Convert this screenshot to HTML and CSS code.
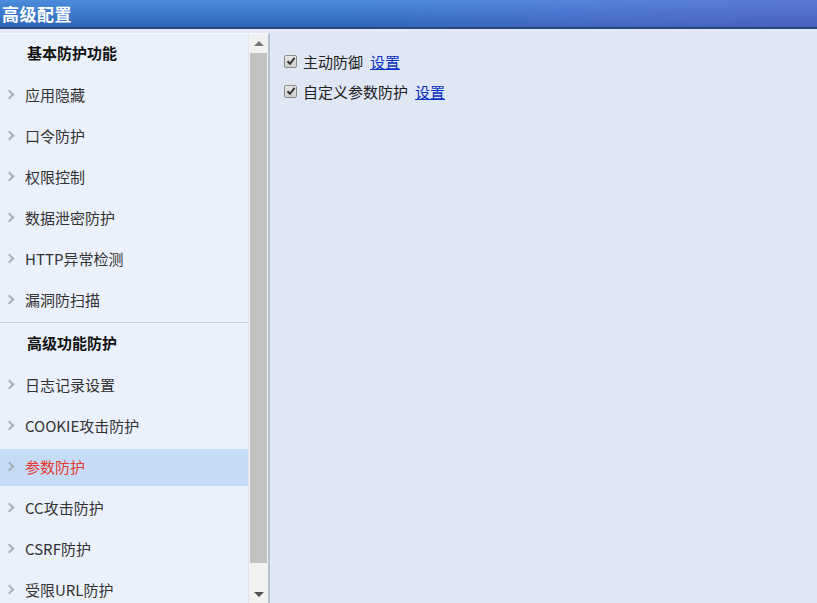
FILE: index.html
```html
<!DOCTYPE html>
<html lang="zh-CN">
<head>
    <meta charset="UTF-8">
    <meta name="viewport" content="width=device-width, initial-scale=1.0">
    <title>高级配置</title>
    <link rel="stylesheet" href="styles.css">
</head>
<body>
    <div class="titlebar">
        <span class="title">高级配置</span>
    </div>
    <div class="main">
        <div class="sidebar">
            <div class="menu">
                <div class="menu-head">基本防护功能</div>
                <div class="menu-item"><span class="arrow"></span>应用隐藏</div>
                <div class="menu-item"><span class="arrow"></span>口令防护</div>
                <div class="menu-item"><span class="arrow"></span>权限控制</div>
                <div class="menu-item"><span class="arrow"></span>数据泄密防护</div>
                <div class="menu-item"><span class="arrow"></span>HTTP异常检测</div>
                <div class="menu-item"><span class="arrow"></span>漏洞防扫描</div>
                <div class="menu-sep"></div>
                <div class="menu-head">高级功能防护</div>
                <div class="menu-item"><span class="arrow"></span>日志记录设置</div>
                <div class="menu-item"><span class="arrow"></span>COOKIE攻击防护</div>
                <div class="menu-item active"><span class="arrow"></span>参数防护</div>
                <div class="menu-item"><span class="arrow"></span>CC攻击防护</div>
                <div class="menu-item"><span class="arrow"></span>CSRF防护</div>
                <div class="menu-item"><span class="arrow"></span>受限URL防护</div>
            </div>
            <div class="scrollbar">
                <div class="scroll-btn up"></div>
                <div class="scroll-thumb"></div>
                <div class="scroll-track"></div>
                <div class="scroll-btn down"></div>
            </div>
        </div>
        <div class="content">
            <div class="option">
                <span class="checkbox"><svg width="10" height="10" viewBox="0 0 10 10"><path d="M1.5 5.2 L4 7.8 L8.6 1.8" fill="none" stroke="#333" stroke-width="2"/></svg></span>
                <span class="label">主动防御</span>
                <a href="#" class="link">设置</a>
            </div>
            <div class="option">
                <span class="checkbox"><svg width="10" height="10" viewBox="0 0 10 10"><path d="M1.5 5.2 L4 7.8 L8.6 1.8" fill="none" stroke="#333" stroke-width="2"/></svg></span>
                <span class="label">自定义参数防护</span>
                <a href="#" class="link">设置</a>
            </div>
        </div>
    </div>
</body>
</html>
```

FILE: styles.css
```css
body {
    margin: 0;
    font-family: "Microsoft YaHei", "Noto Sans CJK SC", sans-serif;
    background-color: #dfe7f5;
    overflow: hidden;
}
.titlebar {
    height: 27px;
    background: linear-gradient(to right, rgba(255,255,255,0) 0%, rgba(255,255,255,0) 40%, rgba(120,100,220,0.25) 70%, rgba(120,90,200,0.35) 100%),
                linear-gradient(to bottom, #4a8ddb 0%, #3a78c9 55%, #2e66b6 100%);
    border-bottom: 2px solid #27477f;
    display: flex;
    align-items: center;
    padding-left: 2px;
}
.title {
    color: #fff;
    font-size: 17px;
    font-weight: bold;
    line-height: 27px;
    letter-spacing: 0.5px;
}
.main {
    display: flex;
    height: 574px;
    padding-top: 4px;
    box-sizing: border-box;
    background-color: #e4eaf5;
}
.sidebar {
    display: flex;
    width: 268px;
    border-top: 1px solid #f4f7fc;
    border-right: 2px solid #b4c2d8;
    overflow: hidden;
}
.menu {
    width: 248px;
    background-color: #eaf1fb;
    border-right: 1px solid #dde5f0;
}
.menu-head {
    height: 43px;
    line-height: 38px;
    padding-left: 27px;
    font-size: 15px;
    font-weight: bold;
    color: #111;
}
.menu-item {
    height: 37px;
    line-height: 35px;
    margin-bottom: 4px;
    padding-left: 25px;
    position: relative;
    font-size: 15px;
    color: #333;
}
.menu-item.active {
    background-color: #c6dcf6;
    color: #e8392f;
}
.arrow {
    position: absolute;
    left: 6px;
    top: 14px;
    width: 5px;
    height: 5px;
    border-top: 2px solid #a8b0ba;
    border-right: 2px solid #a8b0ba;
    transform: rotate(45deg);
}
.menu-sep {
    height: 1px;
    background-color: #c5d0e0;
    margin-top: -1px;
    margin-bottom: 1px;
}
.scrollbar {
    width: 19px;
    display: flex;
    flex-direction: column;
    background-color: #f1f1f1;
}
.scroll-btn {
    height: 19px;
    position: relative;
    flex: none;
}
.scroll-btn.up::after,
.scroll-btn.down::after {
    content: "";
    position: absolute;
    left: 5px;
    border-left: 5px solid transparent;
    border-right: 5px solid transparent;
}
.scroll-btn.up::after {
    top: 7px;
    border-bottom: 5px solid #777;
}
.scroll-btn.down::after {
    top: 8px;
    border-top: 5px solid #505050;
}
.scroll-thumb {
    height: 510px;
    margin: 0 1px;
    background-color: #c1c1c1;
    flex: none;
}
.scroll-track {
    flex: 1;
}
.content {
    flex: 1;
    padding: 13px 0 0 14px;
    background-color: #dfe7f5;
}
.option {
    display: flex;
    align-items: center;
    height: 30px;
    font-size: 15px;
    color: #222;
}
.checkbox {
    width: 11px;
    height: 11px;
    border: 1px solid #8a8a8a;
    border-radius: 2px;
    background: linear-gradient(#e8e8e8, #cfcfcf);
    display: flex;
    align-items: center;
    justify-content: center;
    margin-right: 6px;
}
.label {
    margin-right: 7px;
}
.link {
    color: #0b2fbf;
    text-decoration: underline;
}
```
